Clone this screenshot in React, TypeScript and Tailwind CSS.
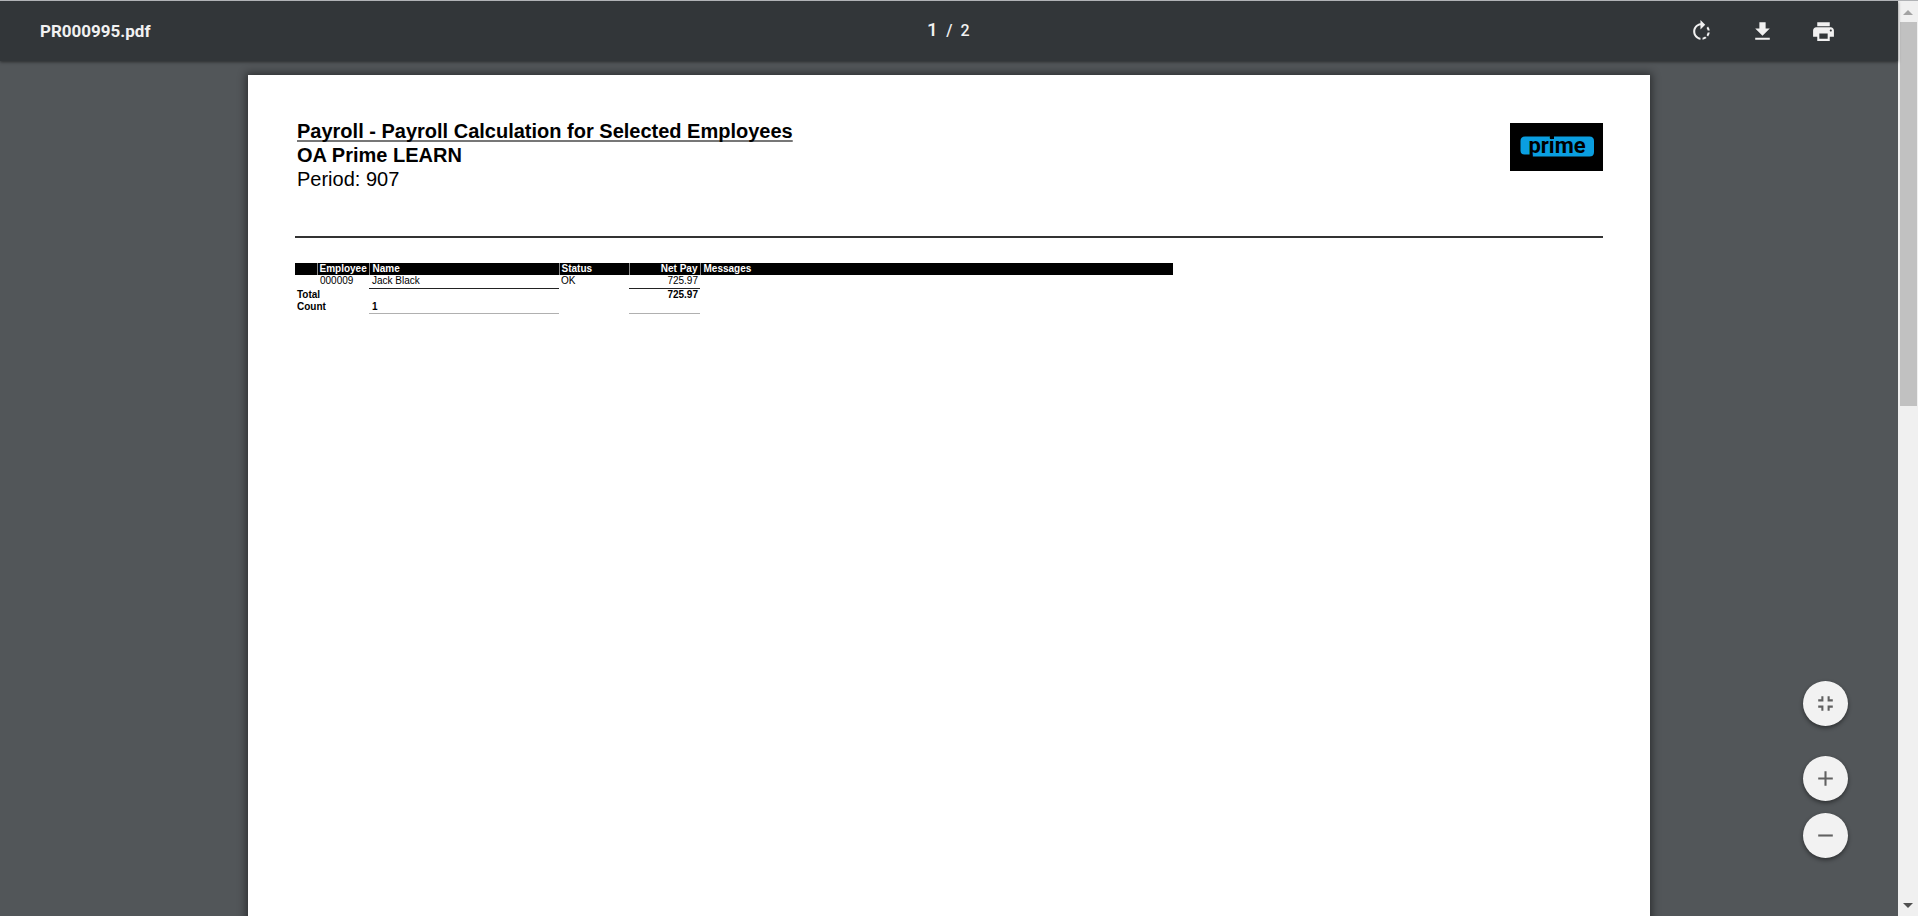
import React, { useState } from "react";

type IconProps = { d: string };

const ICONS = {
  rotate:
    "M15.55 5.55L11 1v3.07C7.06 4.56 4 7.92 4 12s3.05 7.44 7 7.93v-2.02c-2.84-.48-5-2.94-5-5.91s2.16-5.43 5-5.91V10l4.55-4.45zM19.93 11c-.17-1.39-.72-2.73-1.62-3.89l-1.42 1.42c.54.75.88 1.6 1.02 2.47h2.02zM13 17.9v2.02c1.39-.17 2.74-.71 3.9-1.61l-1.44-1.44c-.75.54-1.59.89-2.46 1.03zm3.89-2.42l1.42 1.41c.9-1.16 1.45-2.5 1.62-3.89h-2.02c-.14.87-.48 1.72-1.02 2.48z",
  download: "M19 9h-4V3H9v6H5l7 7 7-7zM5 18v2h14v-2H5z",
  print:
    "M19 8H5c-1.66 0-3 1.34-3 3v6h4v4h12v-4h4v-6c0-1.66-1.34-3-3-3zm-3 11H8v-5h8v5zm3-7c-.55 0-1-.45-1-1s.45-1 1-1 1 .45 1 1-.45 1-1 1zm-1-9H6v4h12V3z",
  fit: "M5 16h3v3h2v-5H5v2zm3-8H5v2h5V5H8v3zm6 11h2v-3h3v-2h-5v5zm2-11V5h-2v5h5V8h-3z",
  add: "M19 13h-6v6h-2v-6H5v-2h6V5h2v6h6z",
  remove: "M19 13H5v-2h14z",
};

function Icon({ d }: IconProps) {
  return (
    <svg viewBox="0 0 24 24" className="size-[25px] fill-current" aria-hidden="true">
      <path d={d} />
    </svg>
  );
}

function ToolButton({ label, d }: { label: string; d: string }) {
  return (
    <button type="button" aria-label={label} className="flex size-[45px] items-center justify-center text-[#f1f1f1]">
      <Icon d={d} />
    </button>
  );
}

function ZoomButton({ label, d }: { label: string; d: string }) {
  return (
    <button
      type="button"
      aria-label={label}
      className="flex size-[45px] items-center justify-center rounded-full bg-[#f2f2f2] text-[#616161] shadow-[0_2px_4px_rgba(0,0,0,0.45)]"
    >
      <Icon d={d} />
    </button>
  );
}

function Toolbar() {
  const [page, setPage] = useState("1");
  return (
    <header className="relative z-10 grid h-[60px] shrink-0 grid-cols-[1fr_auto_1fr] items-center bg-[#323639] text-[#f1f1f1] shadow-[0_1px_3px_rgba(0,0,0,0.5)]">
      <h1 className="pt-[2px] pl-10 text-[17px] font-bold">PR000995.pdf</h1>
      <div className="flex items-baseline gap-[6px] pb-[2px] font-medium">
        <input
          aria-label="Page number"
          value={page}
          onChange={(e) => setPage(e.target.value)}
          className="w-4 bg-transparent text-center text-[19px] outline-none"
        />
        <span className="flex gap-2 pr-1 text-base">
          <span>/</span>
          <span>2</span>
        </span>
      </div>
      <div className="flex justify-end gap-4 pr-[52px]">
        <ToolButton label="Rotate clockwise" d={ICONS.rotate} />
        <ToolButton label="Download" d={ICONS.download} />
        <ToolButton label="Print" d={ICONS.print} />
      </div>
    </header>
  );
}

function PrimeLogo() {
  return (
    <svg viewBox="0 0 93 48" className="h-12 w-[93px] shrink-0" role="img" aria-label="prime">
      <rect width="93" height="48" fill="#000" />
      <path
        d="M15 13.5H79.5Q84 13.5 84 18V29Q84 33.5 79.5 33.5H22.5V31.5H14.5Q10.5 31.5 10.5 27.5V18Q10.5 13.5 15 13.5Z"
        fill="#0a9ee0"
      />
      <rect x="40" y="13" width="4" height="3" fill="#000" />
      <text x="47" y="30" textAnchor="middle" fontFamily="Roboto, sans-serif" fontWeight="700" fontSize="22" fill="#000">
        prime
      </text>
    </svg>
  );
}

function PayrollTable() {
  return (
    <table className="w-[878px] table-fixed border-collapse text-left text-[10px] leading-3 text-black">
      <colgroup>
        <col className="w-[22px]" />
        <col className="w-[52px]" />
        <col className="w-[190px]" />
        <col className="w-[70px]" />
        <col className="w-[71px]" />
        <col />
      </colgroup>
      <thead>
        <tr className="h-3 bg-black text-white">
          <td className="p-0" />
          <th scope="col" className="border-l border-[#8a8a8a] px-[2px] py-0">Employee</th>
          <th scope="col" className="border-l border-[#8a8a8a] px-[3px] py-0">Name</th>
          <th scope="col" className="border-l border-[#8a8a8a] px-[2px] py-0">Status</th>
          <th scope="col" className="border-l border-[#8a8a8a] px-[2px] py-0 text-right">Net Pay</th>
          <th scope="col" className="border-l border-[#8a8a8a] px-[3px] py-0">Messages</th>
        </tr>
      </thead>
      <tbody>
        <tr className="h-[13px] align-top">
          <td className="p-0" />
          <td className="px-[3px] py-0">000009</td>
          <td className="border-b border-[#222] px-[3px] py-0">Jack Black</td>
          <td className="px-[2px] py-0">OK</td>
          <td className="border-b border-[#222] px-[2px] py-0 text-right">725.97</td>
          <td className="p-0" />
        </tr>
      </tbody>
      <tfoot className="font-bold">
        <tr className="h-3 align-bottom">
          <th scope="row" colSpan={2} className="px-[2px] py-0">Total</th>
          <td className="p-0" />
          <td className="p-0" />
          <td className="px-[2px] py-0 text-right">725.97</td>
          <td className="p-0" />
        </tr>
        <tr className="h-[13px] align-top">
          <th scope="row" colSpan={2} className="px-[2px] py-0">Count</th>
          <td className="border-b border-[#b0b0b0] px-[3px] py-0">1</td>
          <td className="p-0" />
          <td className="border-b border-[#b0b0b0] p-0" />
          <td className="p-0" />
        </tr>
      </tfoot>
    </table>
  );
}

function ReportPage() {
  return (
    <article className="mx-auto mt-[14px] min-h-full max-w-[1402px] bg-white px-[47px] pt-12 font-['Liberation_Sans',Arial,sans-serif] text-black shadow-[0_0_8px_2px_rgba(0,0,0,0.45)]">
      <div className="flex min-h-[115px] items-start justify-between border-b-2 border-[#333]">
        <div className="-mt-1 pl-[2px] text-[20px] leading-6">
          <h2 className="font-bold underline decoration-[#777] decoration-2 underline-offset-2 [text-decoration-skip-ink:none]">
            Payroll - Payroll Calculation for Selected Employees
          </h2>
          <p className="font-bold">OA Prime LEARN</p>
          <p>Period: 907</p>
        </div>
        <PrimeLogo />
      </div>
      <div className="pt-[25px]">
        <PayrollTable />
      </div>
    </article>
  );
}

function ScrollBar() {
  return (
    <div className="flex w-5 shrink-0 flex-col bg-[#f0f0f0]" aria-hidden="true">
      <div className="flex h-[21px] items-center justify-center pt-[2px]">
        <svg viewBox="0 0 10 5" className="h-[5px] w-[10px]"><path d="M5 0l5 5H0z" fill="#a3a3a3" /></svg>
      </div>
      <div className="flex-1 pr-[1px] pl-[2px]">
        <div className="h-[44%] bg-[#c1c1c1]" />
      </div>
      <div className="flex h-[21px] items-center justify-center">
        <svg viewBox="0 0 10 5" className="h-[5px] w-[10px]"><path d="M0 0h10L5 5z" fill="#505050" /></svg>
      </div>
    </div>
  );
}

export default function App() {
  return (
    <div className="flex h-screen overflow-hidden border-t border-[#b1b3b6] bg-[#525659] font-[Roboto,sans-serif]">
      <div className="relative flex min-w-0 flex-1 flex-col">
        <Toolbar />
        <main className="min-h-0 flex-1 overflow-hidden">
          <ReportPage />
        </main>
        <div className="absolute right-[50px] bottom-[58px] z-10 flex flex-col gap-3">
          <div className="pb-[18px]">
            <ZoomButton label="Fit to page" d={ICONS.fit} />
          </div>
          <ZoomButton label="Zoom in" d={ICONS.add} />
          <ZoomButton label="Zoom out" d={ICONS.remove} />
        </div>
      </div>
      <ScrollBar />
    </div>
  );
}
